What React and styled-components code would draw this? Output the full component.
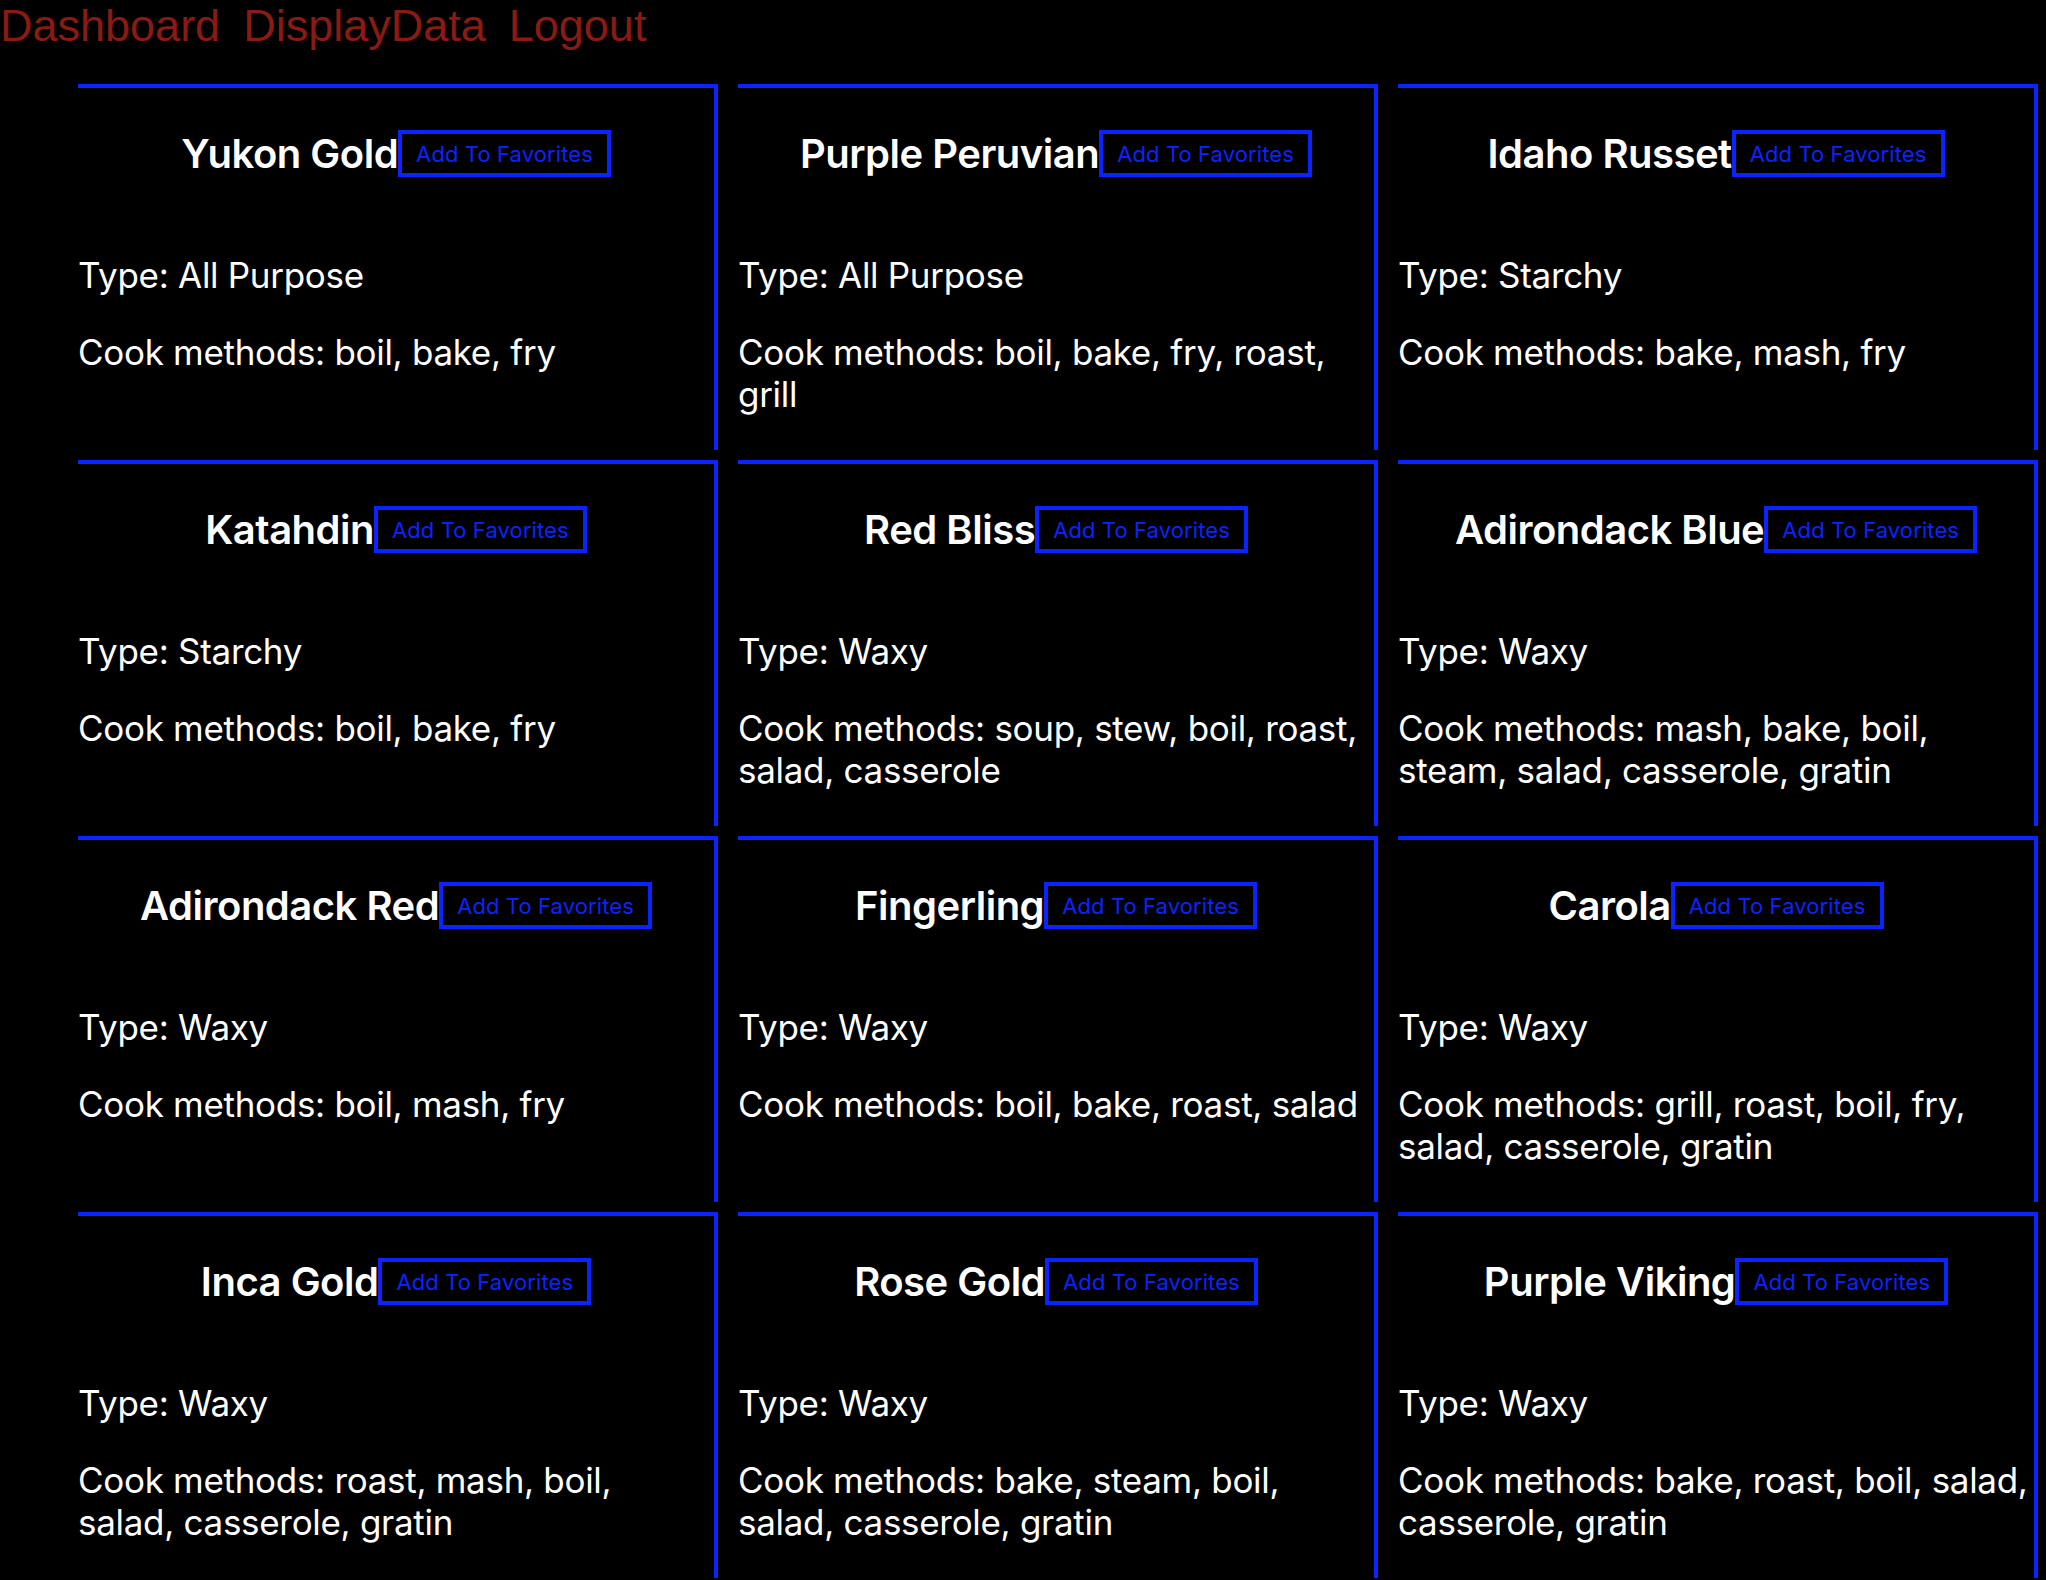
import React from "react";
import styled, { createGlobalStyle } from "styled-components";

const BLUE = "#0a24ff";

const GlobalStyle = createGlobalStyle`
  html, body {
    margin: 0;
    padding: 0;
    background: #000;
  }
  body {
    font-family: Inter, "Noto Sans", sans-serif;
    color: #fff;
  }
`;

const Styled = {
  Nav: styled.nav`
    display: flex;
    gap: 23px;
    height: 84px;
    font-family: "Liberation Sans", Arial, sans-serif;
    font-size: 45px;
  `,
  NavLink: styled.a`
    color: #8a1a12;
    text-decoration: none;
    cursor: pointer;
  `,
  Grid: styled.div`
    display: grid;
    grid-template-columns: repeat(3, 640px);
    column-gap: 20px;
    row-gap: 10px;
    padding-left: 78px;
  `,
  Card: styled.div`
    box-sizing: border-box;
    height: 366px;
    border-top: 4px solid ${BLUE};
    border-right: 4px solid ${BLUE};
    overflow: hidden;
  `,
  Header: styled.div`
    display: flex;
    justify-content: center;
    align-items: center;
    height: 47px;
    margin-top: 42px;
  `,
  Name: styled.h2`
    margin: 0;
    font-size: 40px;
    font-weight: 600;
    line-height: 1;
    letter-spacing: -0.5px;
  `,
  FavButton: styled.button`
    box-sizing: border-box;
    height: 47px;
    padding: 0 14px;
    background: transparent;
    border: 4px solid ${BLUE};
    color: ${BLUE};
    font-family: Inter, "Noto Sans", sans-serif;
    font-size: 22px;
    font-weight: 400;
    letter-spacing: 0.1px;
    cursor: pointer;
  `,
  Info: styled.p`
    margin: ${(p) => (p.$first ? "77px" : "35px")} 0 0;
    font-size: 35px;
    line-height: 42px;
    letter-spacing: -0.3px;
  `,
};

const potatoes = [
  { name: "Yukon Gold", type: "All Purpose", methods: ["boil", "bake", "fry"] },
  { name: "Purple Peruvian", type: "All Purpose", methods: ["boil", "bake", "fry", "roast", "grill"] },
  { name: "Idaho Russet", type: "Starchy", methods: ["bake", "mash", "fry"] },
  { name: "Katahdin", type: "Starchy", methods: ["boil", "bake", "fry"] },
  { name: "Red Bliss", type: "Waxy", methods: ["soup", "stew", "boil", "roast", "salad", "casserole"] },
  { name: "Adirondack Blue", type: "Waxy", methods: ["mash", "bake", "boil", "steam", "salad", "casserole", "gratin"] },
  { name: "Adirondack Red", type: "Waxy", methods: ["boil", "mash", "fry"] },
  { name: "Fingerling", type: "Waxy", methods: ["boil", "bake", "roast", "salad"] },
  { name: "Carola", type: "Waxy", methods: ["grill", "roast", "boil", "fry", "salad", "casserole", "gratin"] },
  { name: "Inca Gold", type: "Waxy", methods: ["roast", "mash", "boil", "salad", "casserole", "gratin"] },
  { name: "Rose Gold", type: "Waxy", methods: ["bake", "steam", "boil", "salad", "casserole", "gratin"] },
  { name: "Purple Viking", type: "Waxy", methods: ["bake", "roast", "boil", "salad", "casserole", "gratin"] },
];

const PotatoCard = ({ potato }) => (
  <Styled.Card>
    <Styled.Header>
      <Styled.Name>{potato.name}</Styled.Name>
      <Styled.FavButton>Add To Favorites</Styled.FavButton>
    </Styled.Header>
    <Styled.Info $first>Type: {potato.type}</Styled.Info>
    <Styled.Info>Cook methods: {potato.methods.join(", ")}</Styled.Info>
  </Styled.Card>
);

const App = () => {
  return (
    <>
      <GlobalStyle />
      <Styled.Nav>
        <Styled.NavLink>Dashboard</Styled.NavLink>
        <Styled.NavLink>DisplayData</Styled.NavLink>
        <Styled.NavLink>Logout</Styled.NavLink>
      </Styled.Nav>
      <Styled.Grid>
        {potatoes.map((p) => (
          <PotatoCard key={p.name} potato={p} />
        ))}
      </Styled.Grid>
    </>
  );
};

export default App;
